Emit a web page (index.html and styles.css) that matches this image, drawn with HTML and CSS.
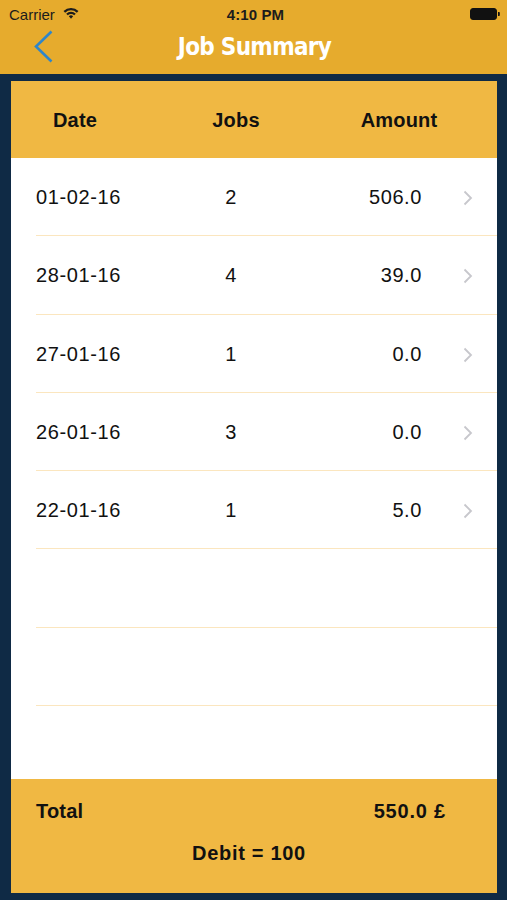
FILE: index.html
```html
<!DOCTYPE html>
<html>
<head>
<meta charset="utf-8">
<link rel="stylesheet" href="styles.css">
</head>
<body>
<div class="screen">
  <header class="topbar">
    <div class="status">
      <div class="status-left">
        <span class="carrier">Carrier</span>
        <svg class="wifi" width="16" height="12" viewBox="0 0 15 11">
          <path d="M0.5 3.6 A10 10 0 0 1 14.5 3.6 L13 5.2 A8 8 0 0 0 2 5.2 Z" fill="#1c1c1c"/>
          <path d="M3 6.1 A6.5 6.5 0 0 1 12 6.1 L10.5 7.7 A4.3 4.3 0 0 0 4.5 7.7 Z" fill="#1c1c1c"/>
          <path d="M5.5 8.6 A3 3 0 0 1 9.5 8.6 L7.5 10.8 Z" fill="#1c1c1c"/>
        </svg>
      </div>
      <span class="time">4:10 PM</span>
      <div class="status-right">
        <svg class="battery" width="30" height="12" viewBox="0 0 30 12">
          <rect x="0.5" y="0.5" width="26" height="11" rx="2.5" fill="#111" stroke="#111"/>
          <path d="M28 4 h1 a0.8 0.8 0 0 1 0.8 0.8 v2.4 a0.8 0.8 0 0 1 -0.8 0.8 h-1 z" fill="#111"/>
        </svg>
      </div>
    </div>
    <div class="navbar">
      <svg class="back" width="20" height="34" viewBox="0 0 20 34">
        <polyline points="17.5,1.5 2,16.5 17.5,31.5" fill="none" stroke="#2F86C9" stroke-width="2.6"/>
      </svg>
      <h1 class="title">Job Summary</h1>
    </div>
  </header>

  <main class="card">
    <div class="thead">
      <span class="th th-date">Date</span>
      <span class="th th-jobs">Jobs</span>
      <span class="th th-amount">Amount</span>
    </div>
    <div class="tbody">
      <div class="row">
        <span class="c-date">01-02-16</span><span class="c-jobs">2</span><span class="c-amount">506.0</span>
        <svg class="chev" width="10" height="16" viewBox="0 0 10 16"><polyline points="1.5,1.5 8,8 1.5,14.5" fill="none" stroke="#C7C7CC" stroke-width="1.8"/></svg>
      </div>
      <div class="row">
        <span class="c-date">28-01-16</span><span class="c-jobs">4</span><span class="c-amount">39.0</span>
        <svg class="chev" width="10" height="16" viewBox="0 0 10 16"><polyline points="1.5,1.5 8,8 1.5,14.5" fill="none" stroke="#C7C7CC" stroke-width="1.8"/></svg>
      </div>
      <div class="row">
        <span class="c-date">27-01-16</span><span class="c-jobs">1</span><span class="c-amount">0.0</span>
        <svg class="chev" width="10" height="16" viewBox="0 0 10 16"><polyline points="1.5,1.5 8,8 1.5,14.5" fill="none" stroke="#C7C7CC" stroke-width="1.8"/></svg>
      </div>
      <div class="row">
        <span class="c-date">26-01-16</span><span class="c-jobs">3</span><span class="c-amount">0.0</span>
        <svg class="chev" width="10" height="16" viewBox="0 0 10 16"><polyline points="1.5,1.5 8,8 1.5,14.5" fill="none" stroke="#C7C7CC" stroke-width="1.8"/></svg>
      </div>
      <div class="row">
        <span class="c-date">22-01-16</span><span class="c-jobs">1</span><span class="c-amount">5.0</span>
        <svg class="chev" width="10" height="16" viewBox="0 0 10 16"><polyline points="1.5,1.5 8,8 1.5,14.5" fill="none" stroke="#C7C7CC" stroke-width="1.8"/></svg>
      </div>
      <div class="row empty"></div>
      <div class="row empty"></div>
      <div class="row empty"></div>
    </div>
    <footer class="tfoot">
      <div class="total-line">
        <span class="total-label">Total</span>
        <span class="total-value">550.0 £</span>
      </div>
      <div class="debit">Debit = 100</div>
    </footer>
  </main>
</div>
</body>
</html>
```

FILE: styles.css
```css
* { box-sizing: border-box; margin: 0; padding: 0; }

html, body {
  width: 507px;
  height: 900px;
  overflow: hidden;
  background: #0F2A45;
}

body {
  font-family: "Liberation Sans", Arial, sans-serif;
  color: #111;
}

.screen {
  display: flex;
  flex-direction: column;
  height: 900px;
}

.topbar {
  background: #E6AB2D;
  height: 74px;
  display: flex;
  flex-direction: column;
}

.status {
  height: 28px;
  display: grid;
  grid-template-columns: 1fr auto 1fr;
  align-items: center;
  padding: 0 7px 0 9px;
  font-size: 15px;
  color: #1c1c1c;
}

.status-left {
  display: flex;
  align-items: center;
  gap: 8px;
}

.wifi { margin-top: -2px; }

.time {
  font-weight: bold;
  letter-spacing: 0.1px;
  margin-left: 2px;
}

.status-right {
  display: flex;
  justify-content: flex-end;
}

.navbar {
  flex: 1;
  display: flex;
  align-items: center;
  justify-content: center;
  position: relative;
}

.back {
  position: absolute;
  left: 34px;
  top: 2px;
}

.title {
  font-family: "DejaVu Sans Condensed", "DejaVu Sans", sans-serif;
  font-stretch: condensed;
  font-weight: bold;
  font-size: 24px;
  letter-spacing: -0.7px;
  color: #fff;
  margin-top: -8px;
  margin-left: 2px;
}

.card {
  margin: 7px 10px 7px 11px;
  flex: 1;
  display: flex;
  flex-direction: column;
  background: #fff;
}

.thead {
  height: 77px;
  background: #F0B843;
  display: grid;
  grid-template-columns: 78px 244px 82px;
  padding-left: 25px;
  padding-top: 2px;
  align-items: center;
  font-weight: bold;
  font-size: 20px;
  letter-spacing: 0.2px;
}

.th { text-align: center; }

.tbody {
  flex: 1;
  display: flex;
  flex-direction: column;
}

.row {
  height: 78.3px;
  margin-left: 25px;
  padding-top: 2px;
  border-bottom: 1.5px solid #FBE6BF;
  display: flex;
  align-items: center;
  font-size: 20px;
  letter-spacing: 0.6px;
}

.row.empty:last-child { border-bottom: none; flex: 1; }

.c-date { width: 130px; }
.c-jobs { width: 130px; text-align: center; }
.c-amount { width: 126px; text-align: right; }
.chev { margin-left: 41px; margin-top: 1px; }

.tfoot {
  height: 114px;
  background: #F0B843;
  display: flex;
  flex-direction: column;
  font-weight: bold;
  font-size: 20px;
  letter-spacing: 0.2px;
  padding: 21px 0 0 25px;
}

.total-line {
  display: flex;
  justify-content: space-between;
  padding-right: 51px;
  height: 22px;
  align-items: center;
}

.total-value { letter-spacing: 0.8px; }

.debit {
  margin-top: 20px;
  text-align: center;
  padding-right: 35px;
  letter-spacing: 0.7px;
}
```
